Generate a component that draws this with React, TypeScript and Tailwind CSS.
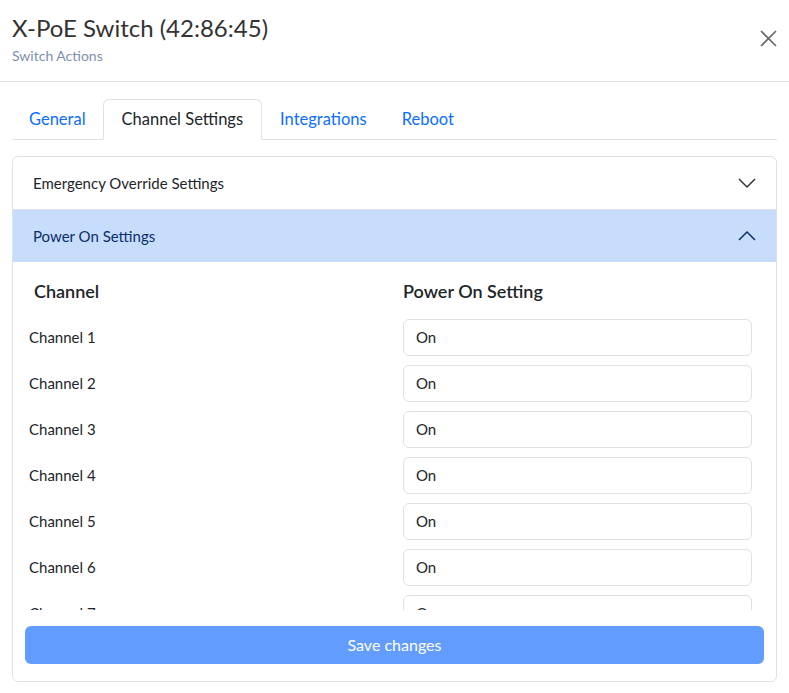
export default function App() {
  const rows = [1, 2, 3, 4, 5, 6, 7, 8];
  return (
    <div className="w-[789px] h-[693px] bg-white overflow-hidden text-[#212529]" style={{ fontFamily: "Lato, 'Open Sans', sans-serif" }}>
      <div className="relative h-[82px] border-b border-[#dee2e6] px-[12px] pt-[12px]">
        <div className="text-[24px] leading-[32px] text-[#333]">X-PoE Switch (42:86:45)</div>
        <div className="text-[14px] leading-[20px] text-[#7d8fae] mt-[2px]">Switch Actions</div>
        <svg className="absolute right-[12px] top-[30px]" width="17" height="17" viewBox="0 0 17 17" stroke="#666" strokeWidth="1.6"><path d="M1 1L16 16M16 1L1 16" /></svg>
      </div>
      <div className="px-[12px] pt-[17px]">
        <div className="flex border-b border-[#dee2e6] h-[41px] text-[16.5px]">
          <div className="px-[17px] flex items-center text-[#0d6efd]">General</div>
          <div className="px-[18px] flex items-center border border-[#dee2e6] border-b-white rounded-t-[6px] -mb-px bg-white">Channel Settings</div>
          <div className="px-[18px] flex items-center text-[#0d6efd]">Integrations</div>
          <div className="px-[17px] flex items-center text-[#0d6efd]">Reboot</div>
        </div>
        <div className="mt-[16px] border border-[#dee2e6] rounded-[6px] h-[526px] flex flex-col overflow-hidden">
          <div className="h-[53px] flex items-center justify-between px-[20px] border-b border-[#dee2e6] text-[15px]">
            <span>Emergency Override Settings</span>
            <svg width="18" height="12" viewBox="0 0 18 12" fill="none" stroke="#333" strokeWidth="1.5"><path d="M1 2l8 8 8-8" /></svg>
          </div>
          <div className="h-[52px] flex items-center justify-between px-[20px] bg-[#c8ddfb] text-[15px] text-[#0a2e6b]">
            <span>Power On Settings</span>
            <svg width="18" height="12" viewBox="0 0 18 12" fill="none" stroke="#0a2e6b" strokeWidth="1.5"><path d="M1 10l8-8 8 8" /></svg>
          </div>
          <div className="h-[348px] overflow-hidden px-[16px]">
            <div className="grid grid-cols-[374px_1fr] pt-[16px] pb-[14px] text-[18px] font-semibold">
              <div className="pl-[5px]">Channel</div>
              <div>Power On Setting</div>
            </div>
            {rows.map((r) => (
              <div key={r} className="grid grid-cols-[374px_1fr] items-center mb-[9px]">
                <div className="text-[15px]">Channel {r}</div>
                <div className="h-[37px] border border-[#dee2e6] rounded-[6px] flex items-center px-[12px] text-[15px] mr-[8px]">On</div>
              </div>
            ))}
          </div>
          <div className="px-[12px] pt-[16px]">
            <div className="h-[38px] rounded-[6px] bg-[#639cff] text-white text-[16px] flex items-center justify-center">Save changes</div>
          </div>
        </div>
      </div>
    </div>
  );
}
